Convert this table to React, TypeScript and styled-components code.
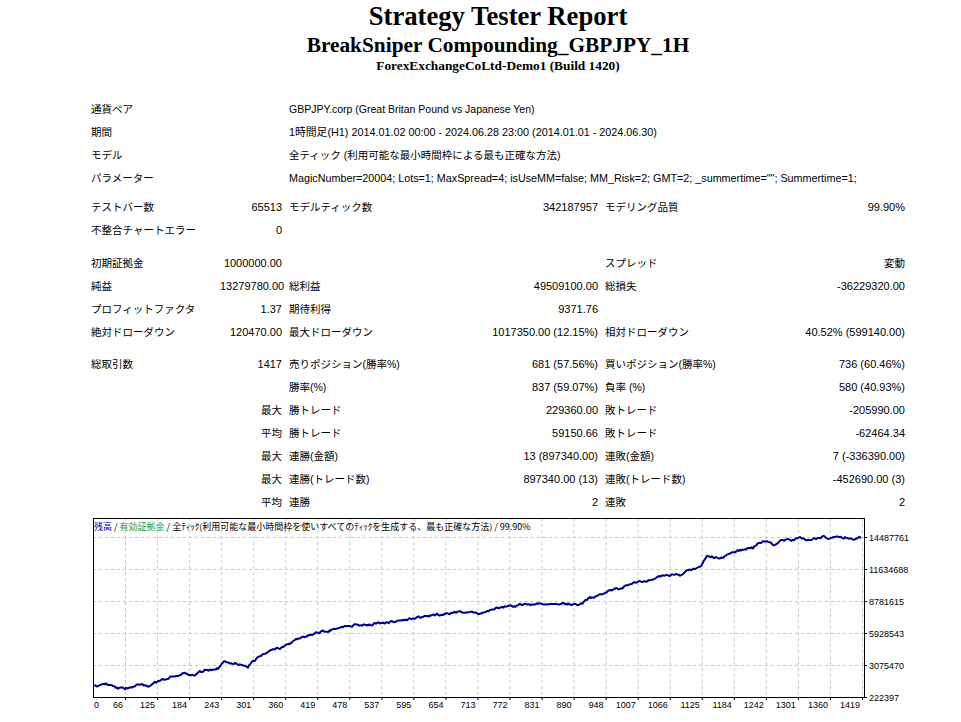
import React from "react";
import styled, { createGlobalStyle } from "styled-components";

const GlobalStyle = createGlobalStyle`
  html, body { margin: 0; padding: 0; background: #ffffff; }
  body {
    font-family: "Liberation Sans", "Noto Sans CJK JP", sans-serif;
    color: #000000;
  }
`;

const Page = styled.div`
  width: 820px;
  margin-left: 88px;
  padding-top: 4px;
`;

const Heading = styled.div<{ $size: number; $lh: number; $mt?: number }>`
  font-family: "Liberation Serif", "Noto Sans CJK JP", serif;
  font-weight: bold;
  font-size: ${(p) => p.$size}px;
  line-height: ${(p) => p.$lh}px;
  margin-top: ${(p) => p.$mt ?? 0}px;
  text-align: center;
  white-space: nowrap;
`;

const Table = styled.div`
  display: flex;
  flex-direction: column;
  margin-top: 24.5px;
`;

const Row = styled.div`
  display: grid;
  grid-template-columns: 128px 68px 190px 124px 172px 133px;
  column-gap: 1px;
  height: 23px;
  align-items: center;
`;

const Spacer = styled.div<{ $h: number }>`
  height: ${(p) => p.$h}px;
`;

const Cell = styled.div<{ $span?: number; $right?: boolean; $size?: number }>`
  grid-column: span ${(p) => p.$span ?? 1};
  padding: 0 3px;
  text-align: ${(p) => (p.$right ? "right" : "left")};
  white-space: nowrap;
  font-size: ${(p) => p.$size ?? 10.5}px;
  line-height: 13px;
`;

const ChartWrap = styled.div`
  margin-top: 0.5px;
  width: 830px;
  height: 208px;
`;

type C = { t?: string; span?: number; right?: boolean; num?: boolean; size?: number };

const rows: (C[] | number)[] = [
  [{ t: "通貨ペア", span: 2 }, { t: "GBPJPY.corp (Great Britan Pound vs Japanese Yen)", span: 4 }],
  [{ t: "期間", span: 2 }, { t: "1時間足(H1) 2014.01.02 00:00 - 2024.06.28 23:00 (2014.01.01 - 2024.06.30)", span: 4, size: 10.8 }],
  [{ t: "モデル", span: 2 }, { t: "全ティック (利用可能な最小時間枠による最も正確な方法)", span: 4 }],
  [{ t: "パラメーター", span: 2 }, { t: 'MagicNumber=20004; Lots=1; MaxSpread=4; isUseMM=false; MM_Risk=2; GMT=2; _summertime=""; Summertime=1;', span: 4, size: 10.78 }],
  6,
  [{ t: "テストバー数" }, { t: "65513", right: true, num: true }, { t: "モデルティック数" }, { t: "342187957", right: true, num: true }, { t: "モデリング品質" }, { t: "99.90%", right: true, num: true }],
  [{ t: "不整合チャートエラー" }, { t: "0", right: true, num: true }, {}, {}, {}, {}],
  10,
  [{ t: "初期証拠金" }, { t: "1000000.00", right: true, num: true }, {}, {}, { t: "スプレッド" }, { t: "変動", right: true }],
  [{ t: "純益" }, { t: "13279780.00", right: true, num: true }, { t: "総利益" }, { t: "49509100.00", right: true, num: true }, { t: "総損失" }, { t: "-36229320.00", right: true, num: true }],
  [{ t: "プロフィットファクタ" }, { t: "1.37", right: true, num: true }, { t: "期待利得" }, { t: "9371.76", right: true, num: true }, {}, {}],
  [{ t: "絶対ドローダウン" }, { t: "120470.00", right: true, num: true }, { t: "最大ドローダウン" }, { t: "1017350.00 (12.15%)", right: true, num: true }, { t: "相対ドローダウン" }, { t: "40.52% (599140.00)", right: true, num: true }],
  8.5,
  [{ t: "総取引数" }, { t: "1417", right: true, num: true }, { t: "売りポジション(勝率%)" }, { t: "681 (57.56%)", right: true, num: true }, { t: "買いポジション(勝率%)" }, { t: "736 (60.46%)", right: true, num: true }],
  [{}, {}, { t: "勝率(%)" }, { t: "837 (59.07%)", right: true, num: true }, { t: "負率 (%)" }, { t: "580 (40.93%)", right: true, num: true }],
  [{}, { t: "最大", right: true }, { t: "勝トレード" }, { t: "229360.00", right: true, num: true }, { t: "敗トレード" }, { t: "-205990.00", right: true, num: true }],
  [{}, { t: "平均", right: true }, { t: "勝トレード" }, { t: "59150.66", right: true, num: true }, { t: "敗トレード" }, { t: "-62464.34", right: true, num: true }],
  [{}, { t: "最大", right: true }, { t: "連勝(金額)" }, { t: "13 (897340.00)", right: true, num: true }, { t: "連敗(金額)" }, { t: "7 (-336390.00)", right: true, num: true }],
  [{}, { t: "最大", right: true }, { t: "連勝(トレード数)" }, { t: "897340.00 (13)", right: true, num: true }, { t: "連敗(トレード数)" }, { t: "-452690.00 (3)", right: true, num: true }],
  [{}, { t: "平均", right: true }, { t: "連勝" }, { t: "2", right: true, num: true }, { t: "連敗" }, { t: "2", right: true, num: true }],
];

/* ---------- chart drawing ---------- */
const OX = 88;
const OY = 514;
const key: [number, number][] = [
  [94, 687], [100, 685], [105, 684], [112, 686], [118, 688], [125, 689], [135, 685], [148, 686],
  [155, 683], [165, 679], [175, 675], [185, 673], [195, 675], [205, 670], [218, 668], [225, 661],
  [235, 663], [242, 665], [248, 668], [255, 660], [262, 655], [270, 650], [280, 648], [290, 643],
  [300, 637], [310, 635], [320, 632], [330, 630], [340, 627], [355, 625], [370, 624], [385, 623],
  [400, 621], [415, 618], [430, 616], [445, 614], [460, 612], [470, 611], [478, 614], [485, 612],
  [500, 607], [520, 605], [540, 604], [560, 603], [567, 604], [580, 605], [590, 598], [607, 592],
  [627, 586], [640, 582], [660, 576], [673, 575], [680, 576], [687, 569], [700, 567], [707, 555],
  [713, 557], [720, 558], [733, 552], [747, 549], [753, 548], [760, 542], [767, 542], [773, 545],
  [783, 540], [793, 540], [797, 537], [807, 540], [817, 538], [823, 537], [833, 538], [847, 537],
  [857, 539], [861, 538],
];

function mulberry(seed: number) {
  let a = seed;
  return () => {
    a |= 0;
    a = (a + 0x6d2b79f5) | 0;
    let t = Math.imul(a ^ (a >>> 15), 1 | a);
    t = (t + Math.imul(t ^ (t >>> 7), 61 | t)) ^ t;
    return ((t ^ (t >>> 14)) >>> 0) / 4294967296;
  };
}

function buildPath(): string {
  const rnd = mulberry(7);
  const pts: string[] = [];
  let n = 0;
  for (let i = 0; i < key.length - 1; i++) {
    const [x0, y0] = key[i];
    const [x1, y1] = key[i + 1];
    for (let x = x0; x < x1; x += 1.2) {
      const f = (x - x0) / (x1 - x0);
      n = n * 0.55 + (rnd() - 0.5) * 2.0;
      const y = y0 + (y1 - y0) * f + n;
      pts.push(`${(x - OX).toFixed(1)},${(y - OY).toFixed(1)}`);
    }
  }
  const [lx, ly] = key[key.length - 1];
  pts.push(`${lx - OX},${ly - OY}`);
  return "M" + pts.join(" L");
}

const xLabels = ["0", "66", "125", "184", "243", "301", "360", "419", "478", "537", "595", "654", "713", "772", "831", "890", "948", "1007", "1066", "1125", "1184", "1242", "1301", "1360", "1419"];
const yLabels = ["14487761", "11634688", "8781615", "5928543", "3075470", "222397"];
const STEP = 32.04;
const FL = 5; // frame left
const FR = 776; // frame right
const FT = 4; // frame top
const FB = 183; // frame bottom
const yGrid = [23, 55, 87, 119, 151, 183];

function Chart() {
  const d = buildPath();
  return (
    <svg width="830" height="208" viewBox="0 0 830 208" xmlns="http://www.w3.org/2000/svg">
      {xLabels.map((_, k) =>
        k === 0 ? null : (
          <g key={"v" + k}>
            <line x1={FL + STEP * k + 0.5} y1={FT} x2={FL + STEP * k + 0.5} y2={FB} stroke="#c8c8c8" strokeDasharray="3 3" />
            <line x1={FL + STEP * k + 0.5} y1={FB} x2={FL + STEP * k + 0.5} y2={FB + 3} stroke="#000" />
          </g>
        )
      )}
      {yGrid.map((y, i) => (
        <g key={"h" + i}>
          {i < 5 && <line x1={FL} y1={y + 0.5} x2={FR} y2={y + 0.5} stroke="#c8c8c8" strokeDasharray="3 3" />}
          <line x1={FR} y1={y + 0.5} x2={FR + 3} y2={y + 0.5} stroke="#000" />
        </g>
      ))}
      <rect x={FL + 0.5} y={FT + 0.5} width={FR - FL} height={FB - FT} fill="none" stroke="#000" />
      <path d={d} fill="none" stroke="#000088" strokeWidth="2" strokeLinejoin="round" />
      <text x={6} y={15.5} fontSize="9" fontFamily='"Noto Sans CJK JP", sans-serif'>
        <tspan fill="#0000a0">残高</tspan>
        <tspan fill="#000"> / </tspan>
        <tspan fill="#1a9a1a">有効証拠金</tspan>
        <tspan fill="#000"> / 全ﾃｨｯｸ(利用可能な最小時間枠を使いすべてのﾃｨｯｸを生成する、最も正確な方法) / 99.90%</tspan>
      </text>
      {xLabels.map((l, k) => (
        <text
          key={"xl" + k}
          x={k === 0 ? 6 : FL + STEP * k - 2}
          y={193.5}
          fontSize="9"
          textAnchor={k === 0 ? "start" : "end"}
          fontFamily='"Liberation Sans", sans-serif'
          fill="#000"
        >
          {l}
        </text>
      ))}
      {yLabels.map((l, i) => (
        <text key={"yl" + i} x={781} y={yGrid[i] + 3.5} fontSize="9" fontFamily='"Liberation Sans", sans-serif' fill="#000">
          {l}
        </text>
      ))}
    </svg>
  );
}

export default function App() {
  return (
    <>
      <GlobalStyle />
      <Page>
        <Heading $size={26.67} $lh={24}>Strategy Tester Report</Heading>
        <Heading $size={21.33} $lh={20} $mt={7}>BreakSniper Compounding_GBPJPY_1H</Heading>
        <Heading $size={13.33} $lh={16} $mt={2.5}>ForexExchangeCoLtd-Demo1 (Build 1420)</Heading>
        <Table>
          {rows.map((r, i) =>
            typeof r === "number" ? (
              <Spacer key={i} $h={r} />
            ) : (
              <Row key={i}>
                {r.map((c, j) => (
                  <Cell key={j} $span={c.span} $right={c.right} $size={c.size ?? (c.num ? 11 : undefined)}>
                    {c.t ?? ""}
                  </Cell>
                ))}
              </Row>
            )
          )}
        </Table>
        <ChartWrap>
          <Chart />
        </ChartWrap>
      </Page>
    </>
  );
}
